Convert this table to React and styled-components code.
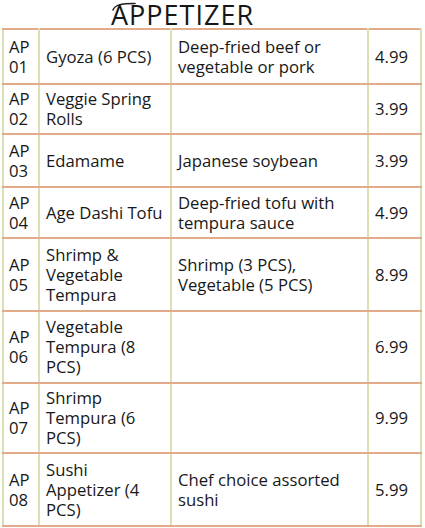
import React from 'react';
import styled, { createGlobalStyle } from 'styled-components';

const items = [
  { code: 'AP 01', name: 'Gyoza (6 PCS)', desc: 'Deep-fried beef or vegetable or pork', price: '4.99', h: 55 },
  { code: 'AP 02', name: 'Veggie Spring Rolls', desc: '', price: '3.99', h: 50 },
  { code: 'AP 03', name: 'Edamame', desc: 'Japanese soybean', price: '3.99', h: 53 },
  { code: 'AP 04', name: 'Age Dashi Tofu', desc: 'Deep-fried tofu with tempura sauce', price: '4.99', h: 51 },
  { code: 'AP 05', name: 'Shrimp & Vegetable Tempura', desc: 'Shrimp (3 PCS), Vegetable (5 PCS)', price: '8.99', h: 73 },
  { code: 'AP 06', name: 'Vegetable Tempura (8 PCS)', desc: '', price: '6.99', h: 72 },
  { code: 'AP 07', name: 'Shrimp Tempura (6 PCS)', desc: '', price: '9.99', h: 70 },
  { code: 'AP 08', name: 'Sushi Appetizer (4 PCS)', desc: 'Chef choice assorted sushi', price: '5.99', h: 73 },
];

const App = () => (
  <Page>
    <GlobalStyle />
    <TitleRow>
      <Title>
        <Swoosh viewBox="0 0 24 9" aria-hidden="true">
          <path d="M1 8 C 3 3, 8 1.5, 23 1.5" fill="none" stroke="#1c1c1c" strokeWidth="1.5" strokeLinecap="round" />
        </Swoosh>
        APPETIZER
      </Title>
    </TitleRow>
    <MenuTable>
      <colgroup>
        <col style={{ width: 36 }} />
        <col style={{ width: 132 }} />
        <col style={{ width: 197 }} />
        <col />
      </colgroup>
      <tbody>
        {items.map((item) => (
          <Row key={item.code} $h={item.h}>
            <CodeCell>{item.code}</CodeCell>
            <Cell>{item.name}</Cell>
            <Cell>{item.desc}</Cell>
            <Cell>{item.price}</Cell>
          </Row>
        ))}
      </tbody>
    </MenuTable>
  </Page>
);

export default App;

const GlobalStyle = createGlobalStyle`
  html, body {
    margin: 0;
    padding: 0;
    background: #ffffff;
  }
`;

const Page = styled.div`
  width: 425px;
  height: 528px;
  overflow: hidden;
  background: #ffffff;
  font-family: "Open Sans", "Noto Sans", sans-serif;
  color: #181818;
`;

const TitleRow = styled.div`
  height: 28px;
  display: flex;
  align-items: flex-start;
  padding-left: 111px;
`;

const Title = styled.div`
  position: relative;
  padding-top: 1px;
  font-size: 27px;
  line-height: 27px;
  letter-spacing: 1px;
  color: #161616;
  white-space: nowrap;
`;

const Swoosh = styled.svg`
  position: absolute;
  left: 1px;
  top: 2px;
  width: 24px;
  height: 9px;
`;

const MenuTable = styled.table`
  margin: 0 0 0 2px;
  width: 420px;
  border-collapse: collapse;
  table-layout: fixed;
  font-size: 16.7px;
  line-height: 20px;
`;

const Row = styled.tr`
  height: ${({ $h }) => $h}px;
`;

const Cell = styled.td`
  padding: 0 6px 0 6px;
  vertical-align: middle;
  border-top: 2px solid #e2ab8a;
  border-bottom: 2px solid #e2ab8a;
  border-left: 2px solid #dcdfb4;
  border-right: 2px solid #dcdfb4;
`;

const CodeCell = styled(Cell)`
  padding: 0 3px 0 5px;
`;
